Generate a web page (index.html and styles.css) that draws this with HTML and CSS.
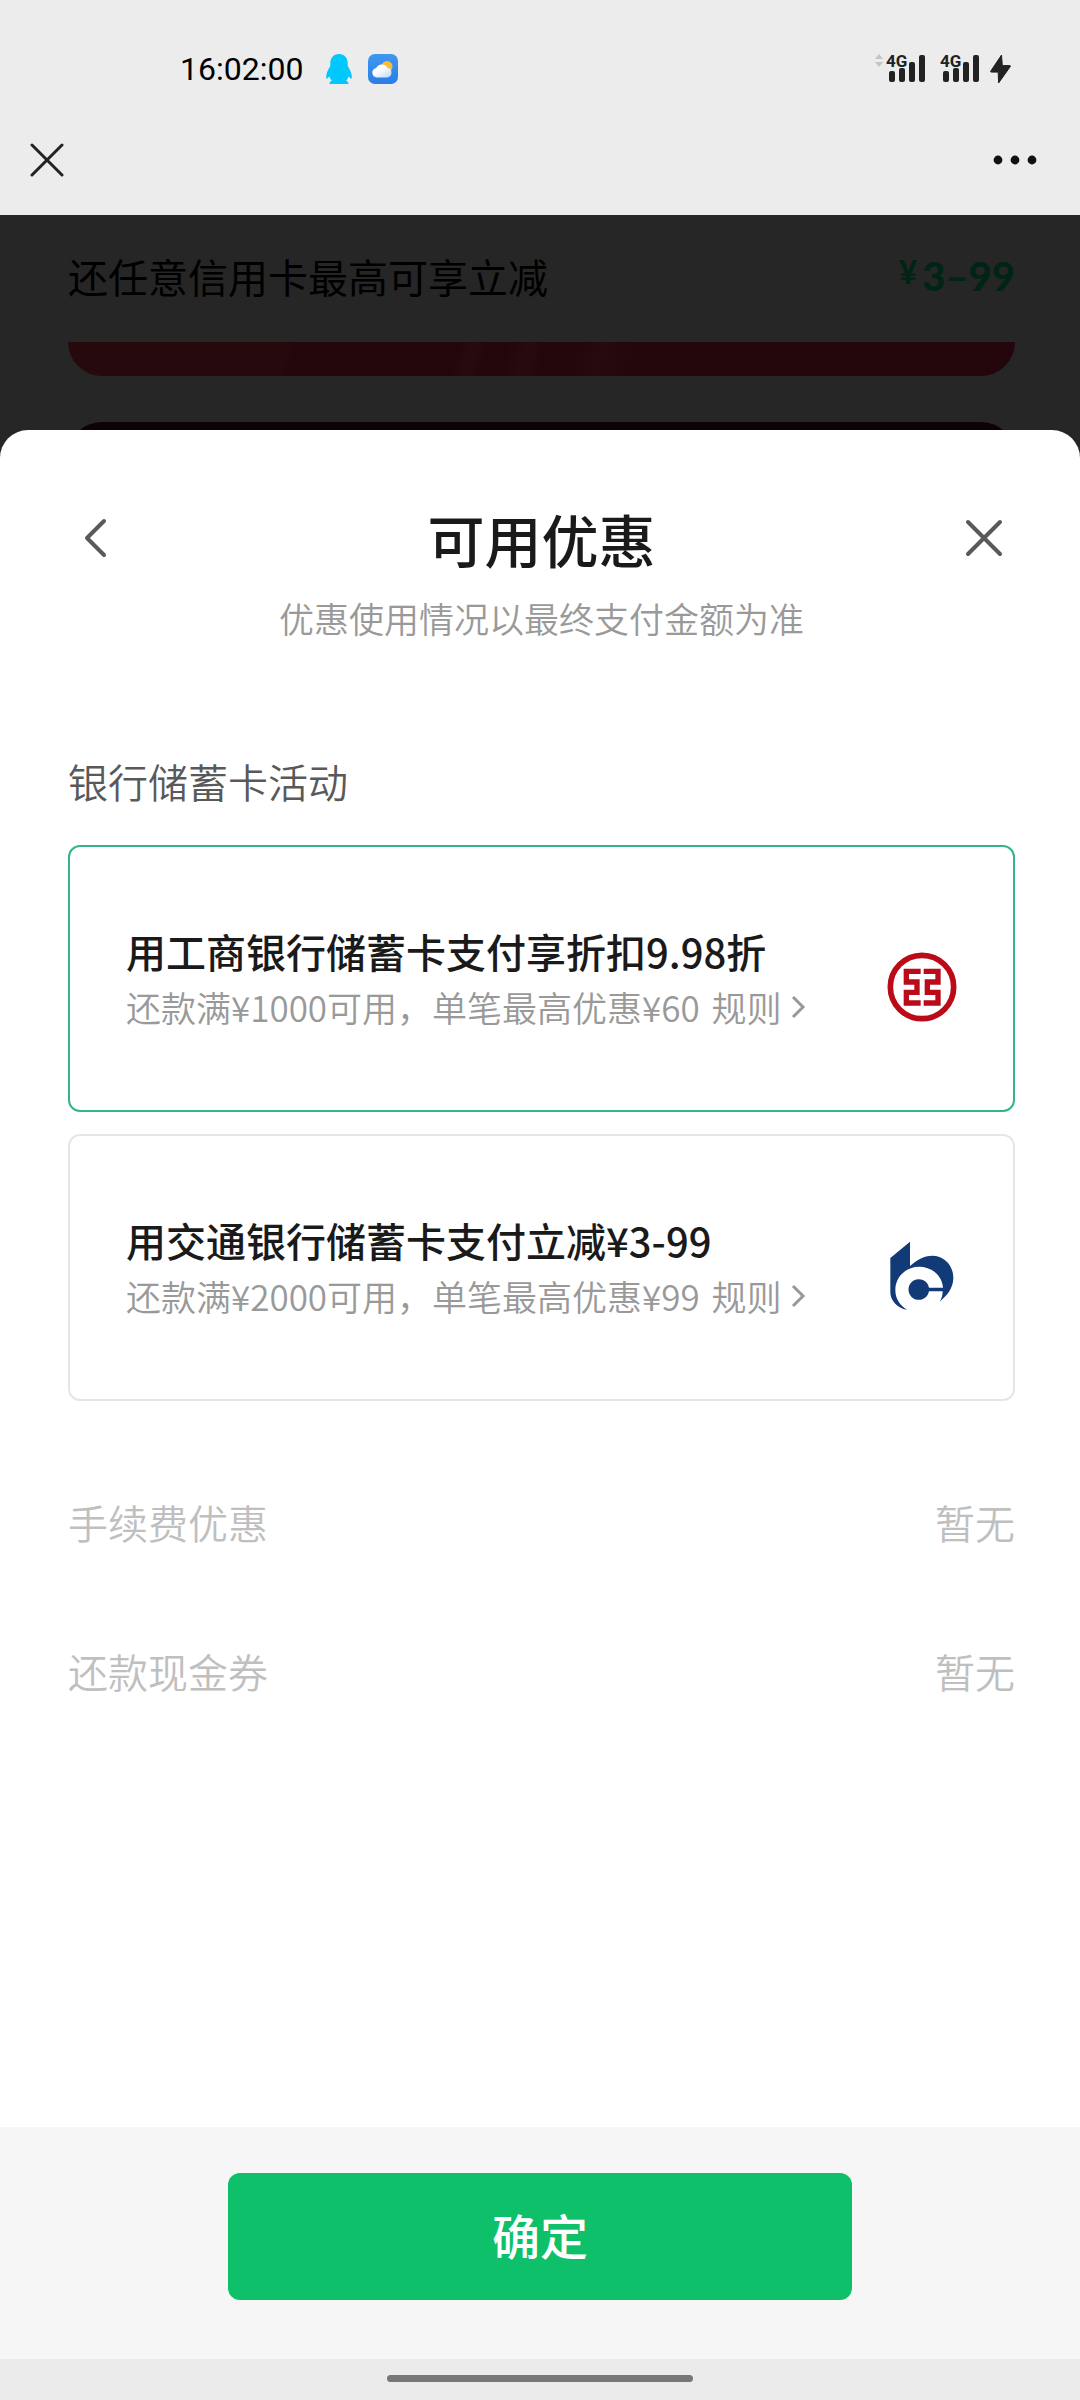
FILE: index.html
```html
<!DOCTYPE html>
<html lang="zh-CN">
<head>
<meta charset="utf-8">
<meta name="viewport" content="width=device-width, initial-scale=1">
<title>可用优惠</title>
<link rel="stylesheet" href="styles.css">
</head>
<body>
<header class="top">
  <div class="status-bar">
    <div class="status-left">
      <time class="clock">16:02:00</time>
      <svg class="qq-icon" viewBox="0 0 26 30" width="26" height="30" aria-hidden="true">
        <path fill="#00c8fc" d="M13 0C7.500 0 4.300 4 4.300 9.500V12C2 15.500 .2 19.500 .2 23c0 2.500 1.300 2 3.200-.7.500 1.800 1.300 3.300 2.500 4.400-1.600.5-2.500 1.400-2.300 3.300h18.800c.2-1.900-.7-2.800-2.300-3.300 1.200-1.100 2-2.600 2.500-4.400 1.900 2.700 3.200 3.200 3.200.7 0-3.500-1.800-7.500-4.100-11V9.500C21.700 4 18.500 0 13 0z"/>
      </svg>
      <svg class="weather-icon" viewBox="0 0 30 30" width="30" height="30" aria-hidden="true">
        <defs>
          <linearGradient id="sky" x1="0" y1="0" x2="0" y2="1"><stop offset="0" stop-color="#3f97f2"/><stop offset="1" stop-color="#2a7ee6"/></linearGradient>
          <linearGradient id="cloud" x1="0" y1="0" x2="1" y2="1"><stop offset="0.400" stop-color="#fff"/><stop offset="1" stop-color="#b9d6fa"/></linearGradient>
        </defs>
        <rect width="30" height="30" rx="7" fill="url(#sky)"/>
        <circle cx="19" cy="12.500" r="5.500" fill="#f6bd3b"/>
        <path fill="url(#cloud)" d="M9 23.500a4.800 4.800 0 0 1-.8-9.500 6.300 6.300 0 0 1 11.300-.2 4.900 4.900 0 0 1-.5 9.700z"/>
      </svg>
    </div>
    <div class="status-right">
      <svg width="51" height="46" viewBox="876 45 51 46" role="img" aria-label="4G">
        <path fill="#c4c4c4" d="M876 58l4-5 4 5zM876 61h8l-4 5z"/>
        <text class="net" x="887" y="66">4G</text>
        <g fill="#222"><rect x="890" y="70" width="6" height="11" rx="2"/><rect x="900" y="67" width="6" height="14" rx="2"/><rect x="910" y="61" width="6" height="20" rx="2"/><rect x="920" y="54" width="6" height="27" rx="2"/></g>
      </svg>
      <svg width="41" height="46" viewBox="886 45 41 46" role="img" aria-label="4G">
        <text class="net" x="887" y="66">4G</text>
        <g fill="#222"><rect x="890" y="70" width="6" height="11" rx="2"/><rect x="900" y="67" width="6" height="14" rx="2"/><rect x="910" y="61" width="6" height="20" rx="2"/><rect x="920" y="54" width="6" height="27" rx="2"/></g>
      </svg>
      <svg class="bolt" width="21" height="30" viewBox="0 0 21 30" aria-hidden="true">
        <path fill="#222" stroke="#222" stroke-width="1" stroke-linejoin="round" d="M11.500 1L.7 17.200c-.3.500 0 .9.500.9H8.200L8.600 29 20.300 12.500c.3-.5 0-.9-.5-.9H12.300z"/>
      </svg>
    </div>
  </div>
  <div class="app-bar">
    <button class="icon-button" type="button" aria-label="关闭页面">
      <svg width="34" height="34" viewBox="0 0 34 34"><path d="M2 2l30 30M32 2L2 32" fill="none" stroke="#222" stroke-width="3" stroke-linecap="round"/></svg>
    </button>
    <button class="icon-button" type="button" aria-label="更多">
      <svg width="44" height="10" viewBox="0 0 44 10" fill="#111"><circle cx="5" cy="5" r="4.400"/><circle cx="22" cy="5" r="4.400"/><circle cx="39" cy="5" r="4.400"/></svg>
    </button>
  </div>
</header>

<section class="backdrop" aria-hidden="true">
  <div class="promo">
    <span class="promo-name">还任意信用卡最高可享立减</span>
    <span class="promo-price"><span class="yen">¥</span><span class="amount">3–99</span></span>
  </div>
  <div class="red-card"></div>
  <div class="peek"><div class="dark-card"></div></div>
</section>

<main class="sheet-area">
  <div class="sheet">
    <div class="sheet-head">
      <button class="icon-button" type="button" aria-label="返回">
        <svg width="38" height="40" viewBox="0 0 38 40"><path d="M24 3L7 20l17 17" fill="none" stroke="#595959" stroke-width="4" stroke-linecap="round" stroke-linejoin="round"/></svg>
      </button>
      <h1 class="sheet-title">可用优惠</h1>
      <button class="icon-button" type="button" aria-label="关闭">
        <svg width="38" height="38" viewBox="0 0 38 38"><path d="M3 3l32 32M35 3L3 35" fill="none" stroke="#595959" stroke-width="4" stroke-linecap="round"/></svg>
      </button>
    </div>
    <p class="sheet-note">优惠使用情况以最终支付金额为准</p>

    <h2 class="group-title">银行储蓄卡活动</h2>
    <div class="offers">
      <div class="offer">
        <input class="offer-radio" type="radio" name="offer" id="offer-icbc" checked>
        <div class="offer-text">
          <label class="offer-name" for="offer-icbc">用工商银行储蓄卡支付享折扣9.98折</label>
          <p class="offer-rule">还款满¥1000可用，单笔最高优惠¥60 <a class="rule-link" href="#rule-icbc">规则<svg width="16" height="24" viewBox="0 0 16 24"><path d="M3 2l10 10L3 22" fill="none" stroke="#999" stroke-width="3"/></svg></a></p>
        </div>
        <svg class="bank-logo" width="70" height="70" viewBox="109 94 210 210" role="img" aria-label="工商银行">
          <circle cx="214" cy="199" r="95" fill="none" stroke="#b90c18" stroke-width="17"/>
          <path fill="none" stroke="#b90c18" stroke-width="16" d="M210 152H167V184H199V215H167V247H210M219 152H262V184H230V215H262V247H219"/>
        </svg>
      </div>
      <div class="offer">
        <input class="offer-radio" type="radio" name="offer" id="offer-bocom">
        <div class="offer-text">
          <label class="offer-name" for="offer-bocom">用交通银行储蓄卡支付立减¥3-99</label>
          <p class="offer-rule">还款满¥2000可用，单笔最高优惠¥99 <a class="rule-link" href="#rule-bocom">规则<svg width="16" height="24" viewBox="0 0 16 24"><path d="M3 2l10 10L3 22" fill="none" stroke="#999" stroke-width="3"/></svg></a></p>
        </div>
        <svg class="bank-logo" width="70" height="70" viewBox="110 122 210 210" role="img" aria-label="交通银行">
          <path fill="#123a76" d="M179 124L120 173V275C120 301 141 324 170 328C149 316 135 295 135 269C135 230 167 199 206 199C245 199 276 227 278 262H236A31 31 0 1 0 236 273H277C277 285 274 295 268 304C290 285 309 264 309 232C309 196 282 166 246 166C220 166 199 180 179 197Z"/>
        </svg>
      </div>
    </div>

    <dl class="extras">
      <div class="extra"><dt>手续费优惠</dt><dd>暂无</dd></div>
      <div class="extra"><dt>还款现金券</dt><dd>暂无</dd></div>
    </dl>
  </div>
</main>

<footer class="action-bar">
  <button class="confirm" type="button">确定</button>
</footer>
<div class="home-bar"><span class="home-pill"></span></div>
</body>
</html>
```
FILE: styles.css
```css
* {
  box-sizing: border-box;
}

body {
  margin: 0;
  min-height: 100vh;
  display: flex;
  flex-direction: column;
  background: #fff;
  color: #1a1a1a;
  font-family: "Noto Sans CJK SC", sans-serif;
  font-size: 40px;
  line-height: 56px;
}

h1, h2, p, dl, dd {
  margin: 0;
}

svg {
  display: block;
}

.icon-button {
  display: flex;
  padding: 0;
  border: 0;
  background: none;
}

/* Phone status bar and web view bar */
.top {
  background: #ececec;
}

.status-bar {
  display: flex;
  justify-content: space-between;
  align-items: center;
  height: 104px;
  padding: 34px 69px 0 180px;
}

.status-left,
.status-right {
  display: flex;
  align-items: center;
}

.clock {
  color: #000;
  font-family: Roboto, sans-serif;
  font-size: 32px;
}

.qq-icon {
  margin-left: 23px;
}

.weather-icon {
  margin-left: 16px;
}

.status-right {
  gap: 13px;
}

.bolt {
  margin-left: -3px;
}

.net {
  fill: #222;
  font-family: "Liberation Sans Narrow", Roboto, sans-serif;
  font-size: 17px;
  font-weight: 700;
}

.app-bar {
  display: flex;
  justify-content: space-between;
  align-items: center;
  height: 111px;
  padding: 0 43px 0 30px;
}

/* Dimmed page under the sheet */
.backdrop {
  padding: 33px 65px 0 68px;
  background: #262626;
}

.promo {
  display: flex;
  justify-content: space-between;
  height: 60px;
  color: #000;
}

.promo-price {
  display: flex;
  gap: 5px;
  color: #022415;
  font-family: Lato, sans-serif;
  font-weight: 900;
  line-height: 56px;
}

.yen {
  font-size: 32px;
  line-height: 48px;
}

.red-card {
  height: 34px;
  margin-top: 34px;
  border-radius: 0 0 34px 34px;
  background: linear-gradient(105deg, #25090c 0 23%, #22060b 24% 41%, #270a10 42% 43%, #22060b 44% 46%, #270a10 48% 49%, #22060b 50% 53%, #270a10 56%, #22060b 60%);
}

.peek {
  height: 8px;
  margin-top: 46px;
  overflow: hidden;
}

.dark-card {
  height: 80px;
  border-radius: 34px;
  background: #0d0204;
}

/* Bottom sheet */
.sheet-area {
  flex: 1;
  display: flex;
  background: #262626;
}

.sheet {
  flex: 1;
  padding: 68px 65px 96px 68px;
  border-radius: 28px 28px 0 0;
  background: #fff;
}

.sheet-head {
  display: flex;
  justify-content: space-between;
  align-items: center;
  padding: 0 12px;
}

.sheet-title {
  font-size: 57px;
  font-weight: 500;
  line-height: 80px;
}

.sheet-note {
  margin-top: 16px;
  color: #999;
  font-size: 35px;
  font-weight: 350;
  line-height: 48px;
  text-align: center;
}

.group-title {
  margin-top: 111px;
  color: #595959;
  font-size: 40px;
  font-weight: 350;
}

.offers {
  display: grid;
  gap: 22px;
  margin-top: 36px;
}

.offer {
  position: relative;
  display: flex;
  justify-content: space-between;
  align-items: center;
  min-height: 267px;
  padding: 0 56px;
  border: 2px solid #e6e6e6;
  border-radius: 12px;
}

.offer:has(.offer-radio:checked) {
  border-color: #35b584;
}

.offer-radio {
  position: absolute;
  inset: 0;
  margin: 0;
  appearance: none;
}

.offer-text {
  margin-bottom: 4px;
}

.offer-name {
  display: block;
  font-weight: 500;
}

.offer-rule {
  margin-top: 4px;
  color: #999;
  font-size: 35px;
  font-weight: 350;
  line-height: 48px;
}

.rule-link {
  position: relative;
  display: inline-flex;
  align-items: center;
  gap: 8px;
  margin-left: 4px;
  color: inherit;
  text-decoration: none;
}

.bank-logo {
  margin-top: 16px;
}

.extras {
  display: grid;
  gap: 93px;
  margin-top: 93px;
  color: #bfbfbf;
  font-weight: 350;
}

.extra {
  display: flex;
  justify-content: space-between;
}

/* Confirm bar */
.action-bar {
  display: flex;
  justify-content: center;
  padding: 46px 68px 59px;
  background: #f6f6f6;
}

.confirm {
  width: 66%;
  min-width: 624px;
  padding: 29px 0 34px;
  border: 0;
  border-radius: 12px;
  background: #0dc069;
  color: #fff;
  font: 500 48px/64px "Noto Sans CJK SC", sans-serif;
}

.home-bar {
  display: flex;
  justify-content: center;
  padding: 16px 0 18px;
  background: #ebebeb;
}

.home-pill {
  width: 306px;
  height: 7px;
  border-radius: 4px;
  background: #777;
}
```
